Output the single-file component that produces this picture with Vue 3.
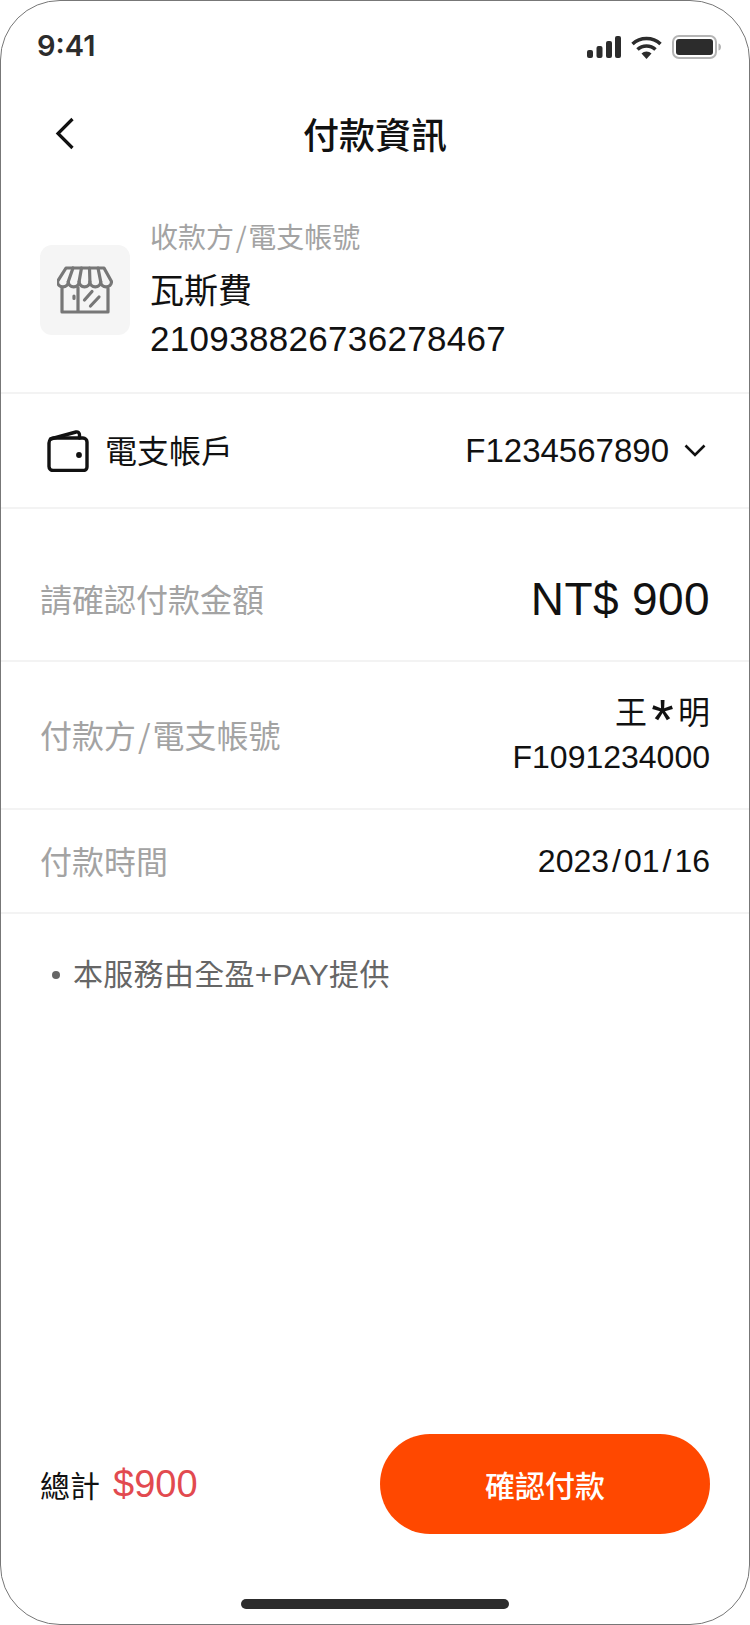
<script setup>
</script>

<template>
  <main class="phone">
    <div class="status">
      <span class="clock">9:41</span>
      <div class="status-icons">
        <svg width="34" height="22" viewBox="0 0 34 22">
          <rect x="0" y="14" width="6" height="8" rx="2" />
          <rect x="9.500" y="10" width="6" height="12" rx="2" />
          <rect x="19" y="5" width="6" height="17" rx="2" />
          <rect x="28" y="0" width="6" height="22" rx="2" />
        </svg>
        <svg width="31" height="23" viewBox="0 0 31 23">
          <path d="M15.500 23 10.500 17.500a7 7 0 0 1 10 0Z" />
          <path d="M6.500 13.500a13 13 0 0 1 18 0" fill="none" stroke="#2c2c2c" stroke-width="3.500" />
          <path d="M1.500 8a20.500 20.500 0 0 1 28 0" fill="none" stroke="#2c2c2c" stroke-width="3.500" />
        </svg>
        <svg width="50" height="24" viewBox="0 0 50 24">
          <rect x="1" y="1" width="43" height="22" rx="6" fill="none" stroke="#b5b5b5" stroke-width="2" />
          <rect x="4" y="4" width="37" height="16" rx="3" />
          <path d="M46.500 8.500c2 .5 2.500 2 2.500 3.500s-.5 3-2.500 3.500Z" fill="#b5b5b5" />
        </svg>
      </div>
    </div>

    <header class="nav">
      <svg class="back" width="20" height="33" viewBox="0 0 20 33">
        <path d="M17.500 2 3 16.500 17.500 31" fill="none" stroke="#111" stroke-width="3.200" />
      </svg>
      <h1>付款資訊</h1>
    </header>

    <section class="payee row-line">
      <div class="store">
        <svg width="56" height="48" viewBox="0 0 56 48" fill="none" stroke="#777" stroke-width="3.200" stroke-linejoin="round" stroke-linecap="round">
          <path d="M9 2h38l7.500 13.500a5.400 5.400 0 0 1-10.800 0 5.400 5.400 0 0 1-10.800 0 5.400 5.400 0 0 1-10.800 0 5.400 5.400 0 0 1-10.800 0 5.400 5.400 0 0 1-10.800 0Z" />
          <path d="M16 2l-4.700 13.500M24.500 2l-2.400 13.500M32.500 2l.4 13.500M41 2l2.700 13.500" />
          <path d="M5 22.500v23.500h46V22.500M21 21.500v24.500" />
          <path d="M17 30v2.500M27.500 34l7.500-8.500M33.500 40l8.500-9" />
        </svg>
      </div>
      <div class="payee-text">
        <div class="payee-label">收款方<span class="slash">/</span>電支帳號</div>
        <div class="payee-name">瓦斯費</div>
        <div class="payee-no">210938826736278467</div>
      </div>
    </section>

    <section class="account row-line">
      <div class="account-left">
        <svg width="42" height="42" viewBox="0 0 42 42" fill="none" stroke="#111" stroke-width="3.400" stroke-linejoin="round" stroke-linecap="round">
          <path d="M2 13a5 5 0 0 1 5-5h29a4 4 0 0 1 4 4v25a3.500 3.500 0 0 1-3.500 3.500H6a4 4 0 0 1-4-4Z" />
          <path d="M3.500 9 29 2c2-.5 3.500 1 3.500 3v3" />
          <circle cx="32" cy="25" r="1.200" fill="#111" />
        </svg>
        <span>電支帳戶</span>
      </div>
      <div class="account-right">
        <span>F1234567890</span>
        <svg width="22" height="13" viewBox="0 0 22 13">
          <path d="M1.500 1.500 11 11l9.500-9.500" fill="none" stroke="#111" stroke-width="2.600" />
        </svg>
      </div>
    </section>

    <section class="amount row-line">
      <span class="label">請確認付款金額</span>
      <span class="amount-value">NT$ 900</span>
    </section>

    <section class="detail payer row-line">
      <span class="label">付款方<span class="slash">/</span>電支帳號</span>
      <div class="detail-value">
        <div>王<span class="star">*</span>明</div>
        <div>F1091234000</div>
      </div>
    </section>

    <section class="detail time row-line">
      <span class="label">付款時間</span>
      <div class="detail-value">2023<span class="date-slash">/</span>01<span class="date-slash">/</span>16</div>
    </section>

    <ul class="notes">
      <li>本服務由全盈+PAY提供</li>
    </ul>

    <footer class="bottom">
      <div class="pay-bar">
        <div class="total">
          <span class="total-label">總計</span>
          <span class="total-value">$900</span>
        </div>
        <button class="confirm" type="button">確認付款</button>
      </div>
      <div class="home"></div>
    </footer>
  </main>
</template>

<style>
html,
body {
  margin: 0;
  background: #fff;
}
</style>

<style scoped>
.phone {
  box-sizing: border-box;
  width: 750px;
  height: 1625px;
  border: 1px solid #777;
  border-radius: 60px;
  background: #fff;
  display: flex;
  flex-direction: column;
  overflow: hidden;
  color: #111;
  font-family: "Liberation Sans", "Noto Sans CJK TC", sans-serif;
}

.status {
  height: 89px;
  flex: none;
  box-sizing: border-box;
  padding: 25px 27px 0 36px;
  display: flex;
  justify-content: space-between;
  align-items: flex-start;
}

.clock {
  font-family: Inter, sans-serif;
  font-size: 29px;
  line-height: 40px;
  font-weight: 600;
  color: #2c2c2c;
}

.status-icons {
  display: flex;
  align-items: center;
  gap: 10px;
  padding-top: 9px;
  fill: #2c2c2c;
}

.nav {
  height: 86px;
  flex: none;
  position: relative;
  display: flex;
  align-items: center;
  justify-content: center;
}

.nav h1 {
  margin: 0;
  font-size: 36px;
  font-weight: 500;
  color: #111;
}

.back {
  position: absolute;
  left: 54px;
  top: 27px;
}

.row-line {
  box-sizing: border-box;
  flex: none;
  border-bottom: 2px solid #f3f3f3;
  padding: 0 39px;
  display: flex;
  align-items: center;
}

.payee {
  height: 218px;
  gap: 20px;
  padding-top: 12px;
}

.store {
  width: 90px;
  height: 90px;
  border-radius: 12px;
  background: #f5f5f5;
  display: flex;
  align-items: center;
  justify-content: center;
}

.payee-label {
  font-family: "Noto Sans CJK TC", sans-serif;
  font-size: 28px;
  line-height: 40px;
  color: #a3a3a3;
  margin-top: -3px;
}

.slash {
  padding: 0 0.06em;
}

.payee-name {
  font-size: 34px;
  line-height: 50px;
  margin-top: 10px;
}

.payee-no {
  font-size: 35px;
  letter-spacing: 0.32px;
  line-height: 46px;
}

.account {
  height: 115px;
  justify-content: space-between;
}

.account-left {
  display: flex;
  align-items: center;
  gap: 16px;
  font-size: 32px;
  padding-left: 7px;
}

.account-left span {
  padding-bottom: 4px;
}

.account-right {
  display: flex;
  align-items: center;
  gap: 15px;
  font-size: 33px;
  padding-right: 4px;
}

.label {
  font-family: "Noto Sans CJK TC", sans-serif;
  font-size: 32px;
  color: #a3a3a3;
  padding-bottom: 2px;
}

.amount {
  height: 153px;
  justify-content: space-between;
  padding-top: 28px;
}

.amount-value {
  font-size: 46px;
  letter-spacing: 0.4px;
}

.detail {
  justify-content: space-between;
}

.payer {
  height: 148px;
}

.time {
  height: 104px;
}

.detail-value {
  text-align: right;
  font-size: 32px;
  line-height: 44px;
}

.star {
  display: inline-block;
  width: 31px;
  text-align: center;
  font-size: 58px;
  line-height: 0;
  vertical-align: -16px;
}

.date-slash {
  padding: 0 3px;
}

.notes {
  margin: 0;
  padding: 39px 0 0 51px;
  list-style: none;
  font-size: 30px;
  letter-spacing: 0.3px;
  line-height: 44px;
  color: #666;
}

.notes li {
  display: flex;
  align-items: center;
  gap: 13px;
}

.notes li::before {
  content: "";
  width: 8px;
  height: 8px;
  border-radius: 50%;
  background: #666;
}

.bottom {
  margin-top: auto;
}

.pay-bar {
  display: flex;
  align-items: center;
  justify-content: space-between;
  padding: 0 39px;
}

.total {
  display: flex;
  align-items: center;
  gap: 13px;
}

.total-label {
  font-size: 30px;
}

.total-value {
  font-size: 38px;
  color: #e24a4f;
}

.confirm {
  width: 330px;
  height: 100px;
  border: none;
  border-radius: 50px;
  background: #ff4800;
  color: #fff;
  font-family: inherit;
  font-size: 30px;
  font-weight: 500;
}

.home {
  width: 268px;
  height: 10px;
  border-radius: 5px;
  background: #2c2c2c;
  margin: 65px auto 15px;
}
</style>
